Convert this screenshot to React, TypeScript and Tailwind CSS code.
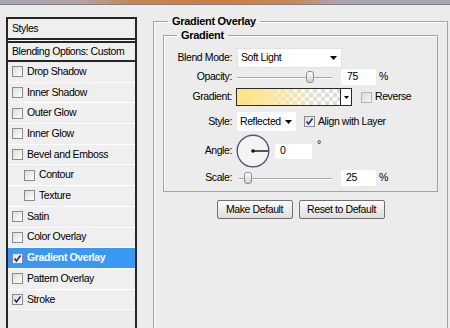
import React from 'react'

const font = "font-['Liberation_Sans',Arial,sans-serif]"

function Check({ checked = false, dim = false }: { checked?: boolean; dim?: boolean }) {
  return (
    <span className={`relative inline-flex w-[11px] h-[11px] shrink-0 border ${dim ? 'border-[#b5b5b5] bg-[linear-gradient(135deg,#d8d8d8,#f6f6f6)]' : 'border-[#8c8c8c] bg-[linear-gradient(135deg,#dcdcdc,#ffffff)]'}`}>
      {checked && (
        <svg viewBox="0 0 11 11" className="absolute -left-px -top-px w-[11px] h-[11px]">
          <path d="M2.5 5.5 L4.5 8 L8.5 2.5" fill="none" stroke="#1c2b8a" strokeWidth="1.6" />
        </svg>
      )}
    </span>
  )
}

function Arrow() {
  return (
    <svg viewBox="0 0 7 4" className="w-[7px] h-[4px] shrink-0">
      <path d="M0 0 H7 L3.5 4 Z" fill="#000" />
    </svg>
  )
}

function Slider({ width, thumb }: { width: number; thumb: number }) {
  return (
    <div className="relative h-full" style={{ width }}>
      <div className="absolute left-0 right-0 top-1/2 h-[2px] border-t border-[#a8a8a8] bg-white" />
      <div
        className="absolute top-1/2 -translate-y-1/2 w-[8px] h-[12px] rounded-[3px] border border-[#8e8e8e] bg-[linear-gradient(180deg,#ffffff,#cfcfcf)]"
        style={{ left: thumb - 4 }}
      />
    </div>
  )
}

const rows: { label: string; checked?: boolean; sub?: boolean; active?: boolean }[] = [
  { label: 'Drop Shadow' },
  { label: 'Inner Shadow' },
  { label: 'Outer Glow' },
  { label: 'Inner Glow' },
  { label: 'Bevel and Emboss' },
  { label: 'Contour', sub: true },
  { label: 'Texture', sub: true },
  { label: 'Satin' },
  { label: 'Color Overlay' },
  { label: 'Gradient Overlay', checked: true, active: true },
  { label: 'Pattern Overlay' },
  { label: 'Stroke', checked: true },
]

export default function App() {
  return (
    <div className={`w-[450px] h-[328px] overflow-hidden bg-[#ececec] text-black text-[10.5px] tracking-[-0.4px] ${font}`}>
      <div className="h-[4px] bg-[linear-gradient(90deg,#aaa6b6_0%,#b3a3a6_18%,#c8844a_30%,#cf7c3c_50%,#c98a55_66%,#aca4b2_75%,#a9a7b6_100%)]" />
      <div className="h-px bg-[#7d7d85]" />

      <div className="flex">
        {/* styles list */}
        <div className="ml-[6px] mt-[12px] w-[131px] h-[330px] border-2 border-[#262626] bg-[#efefef] flex flex-col">
          <div className="h-[21px] shrink-0 flex items-center pl-[4px] border-b-2 border-[#262626]">Styles</div>
          <div className="h-px shrink-0 bg-[#f6f6f6]" />
          <div className="h-[21px] shrink-0 flex items-center pl-[4px] border-t-2 border-b-2 border-[#262626]">Blending Options: Custom</div>
          {rows.map(r => (
            <div
              key={r.label}
              className={`h-[20.7px] shrink-0 flex items-center gap-[4px] border-b border-white ${r.sub ? 'pl-[16px]' : 'pl-[4px]'} ${r.active ? 'bg-[#3a98f3] text-white font-bold' : ''}`}
            >
              <Check checked={r.checked} />
              <span>{r.label}</span>
            </div>
          ))}
          <div className="flex-1 bg-[#ececec]" />
        </div>

        {/* gradient overlay */}
        <fieldset className="ml-[16px] mt-[9px] w-[295px] h-[330px] border border-[#a3a3a3] shadow-[inset_1px_1px_0_#fff]">
          <legend className="ml-[14px] px-[4px] font-bold text-[11px] tracking-[-0.3px] leading-[14px]">Gradient Overlay</legend>
          <fieldset className="mx-[9px] border border-[#a3a3a3] shadow-[inset_1px_1px_0_#fff] pb-[5px]">
            <legend className="ml-[13px] px-[4px] font-bold text-[11px] tracking-[-0.3px] leading-[14px]">Gradient</legend>

            <div className="mt-[6px] h-[20px] flex items-center">
              <div className="w-[68px] text-right">Blend Mode:</div>
              <div className="ml-[5px] w-[105px] h-[20px] bg-white border border-[#e3e3e3] flex items-center justify-between pl-[3px] pr-[4px]">
                <span>Soft Light</span>
                <Arrow />
              </div>
            </div>

            <div className="h-[18px] flex items-center">
              <div className="w-[68px] text-right">Opacity:</div>
              <div className="ml-[5px] h-full"><Slider width={95} thumb={73} /></div>
              <div className="ml-[9px] w-[35px] h-[16px] bg-white flex items-center pl-[6px]">75</div>
              <span className="ml-[3px]">%</span>
            </div>

            <div className="mt-[2px] h-[18px] flex items-center">
              <div className="w-[68px] text-right">Gradient:</div>
              <div className="ml-[4px] w-[116px] h-[18px] border border-[#2b2b2b] flex">
                <div className="flex-1 bg-[linear-gradient(90deg,#ffe485,#fbe79a_25%,rgba(250,240,190,0.2)_75%,rgba(255,255,255,0)),repeating-conic-gradient(#dcdcdc_0_25%,#ffffff_0_50%)] [background-size:100%_100%,8px_8px]" />
                <div className="w-[11px] border-l border-[#2b2b2b] bg-white flex items-center justify-center">
                  <svg viewBox="0 0 5 3" className="w-[5px] h-[3px]"><path d="M0 0 H5 L2.5 3 Z" fill="#000" /></svg>
                </div>
              </div>
              <div className="ml-[9px] flex items-center gap-[3px]">
                <Check dim />
                <span>Reverse</span>
              </div>
            </div>

            <div className="mt-[6px] h-[19px] flex items-center">
              <div className="w-[68px] text-right">Style:</div>
              <div className="ml-[5px] w-[59px] h-[19px] bg-white flex items-center justify-between pl-[3px] pr-[4px]">
                <span>Reflected</span>
                <Arrow />
              </div>
              <div className="ml-[8px] flex items-center gap-[3px]">
                <Check checked />
                <span>Align with Layer</span>
              </div>
            </div>

            <div className="mt-[3px] h-[34px] flex items-center">
              <div className="w-[68px] text-right">Angle:</div>
              <svg viewBox="0 0 34 34" className="ml-[4px] w-[34px] h-[34px]">
                <circle cx="17" cy="17" r="15.8" fill="#f4f4f4" stroke="#4d5a78" strokeWidth="1.4" />
                <line x1="17" y1="17" x2="32" y2="17" stroke="#111" strokeWidth="1.4" />
                <circle cx="17" cy="17" r="1.8" fill="#111" />
              </svg>
              <div className="ml-[5px] w-[37px] h-[15px] bg-white flex items-center pl-[5px]">0</div>
              <span className="ml-[5px] self-start mt-[5px] leading-none">°</span>
            </div>

            <div className="mt-[2px] h-[16px] flex items-center">
              <div className="w-[68px] text-right">Scale:</div>
              <div className="ml-[7px] h-full"><Slider width={93} thumb={9} /></div>
              <div className="ml-[9px] w-[35px] h-[16px] bg-white flex items-center pl-[5px]">25</div>
              <span className="ml-[3px]">%</span>
            </div>
          </fieldset>

          <div className="mt-[8px] flex justify-center gap-[6px]">
            <button className="w-[76px] h-[19px] rounded-[2px] border border-[#707070] bg-[linear-gradient(180deg,#fbfbfb,#dedede)]">Make Default</button>
            <button className="w-[86px] h-[19px] rounded-[2px] border border-[#707070] bg-[linear-gradient(180deg,#fbfbfb,#dedede)]">Reset to Default</button>
          </div>
        </fieldset>
      </div>
    </div>
  )
}
